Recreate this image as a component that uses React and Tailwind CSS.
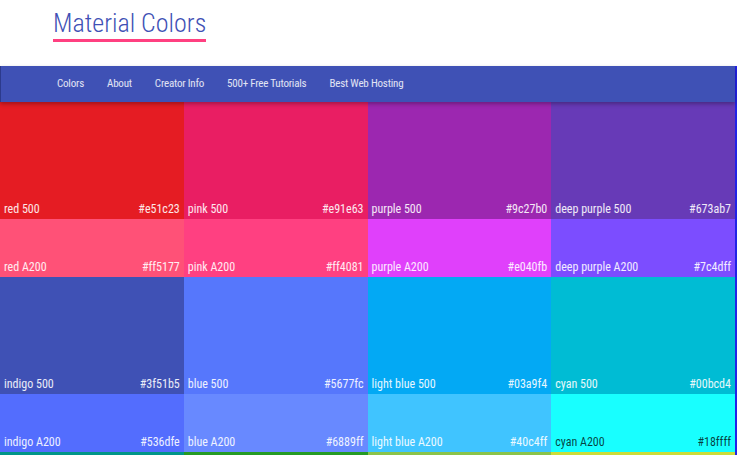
const rows = [
  {
    tall: true,
    items: [
      { name: "red 500", hex: "#e51c23" },
      { name: "pink 500", hex: "#e91e63" },
      { name: "purple 500", hex: "#9c27b0" },
      { name: "deep purple 500", hex: "#673ab7" },
    ],
  },
  {
    tall: false,
    items: [
      { name: "red A200", hex: "#ff5177" },
      { name: "pink A200", hex: "#ff4081" },
      { name: "purple A200", hex: "#e040fb" },
      { name: "deep purple A200", hex: "#7c4dff" },
    ],
  },
  {
    tall: true,
    items: [
      { name: "indigo 500", hex: "#3f51b5" },
      { name: "blue 500", hex: "#5677fc" },
      { name: "light blue 500", hex: "#03a9f4" },
      { name: "cyan 500", hex: "#00bcd4" },
    ],
  },
  {
    tall: false,
    items: [
      { name: "indigo A200", hex: "#536dfe" },
      { name: "blue A200", hex: "#6889ff" },
      { name: "light blue A200", hex: "#40c4ff" },
      { name: "cyan A200", hex: "#18ffff", dark: true },
    ],
  },
];

// next row just peeks in at the bottom edge
const nextRow = ["#009688", "#259b24", "#8bc34a", "#cddc39"];

const links = ["Colors", "About", "Creator Info", "500+ Free Tutorials", "Best Web Hosting"];

function Swatch({ name, hex, dark, tall }) {
  const text = dark ? "text-black/75" : "text-white/90";
  return (
    <div
      className={`flex items-end justify-between px-1 pb-1 ${tall ? "h-[117px]" : "h-[58px]"}`}
      style={{ backgroundColor: hex }}
    >
      <span className={`text-[12px] leading-none ${text}`}>{name}</span>
      <span className={`text-[12px] leading-none ${text}`}>{hex}</span>
    </div>
  );
}

export default function App() {
  return (
    <div className="w-[737px] h-[455px] overflow-hidden bg-white font-['Roboto',sans-serif] font-stretch-condensed">
      <header className="h-[66px] pl-[53px]">
        <h1 className="inline-block mt-[10px] pb-[3px] border-b-[3px] border-[#ff4081] text-[26px] leading-none font-light text-[#3f51b5]">
          Material Colors
        </h1>
      </header>

      <div className="w-[737px] border-r-2 border-[#2323e6]">
        <nav className="relative z-10 h-[36px] flex items-center gap-[23px] pl-[56px] bg-[#3f51b5] border-l border-[#2c3a8c] shadow-[0_2px_4px_rgba(0,0,0,0.3)]">
          {links.map((l) => (
            <a key={l} href="#" className="text-[11px] tracking-[-0.2px] text-white/85">
              {l}
            </a>
          ))}
        </nav>

        {rows.map((row, i) => (
          <div key={i} className="grid grid-cols-4">
            {row.items.map((c) => (
              <Swatch key={c.name} {...c} tall={row.tall} />
            ))}
          </div>
        ))}

        <div className="grid grid-cols-4 h-[20px]">
          {nextRow.map((hex) => (
            <div key={hex} style={{ backgroundColor: hex }} />
          ))}
        </div>
      </div>
    </div>
  );
}
